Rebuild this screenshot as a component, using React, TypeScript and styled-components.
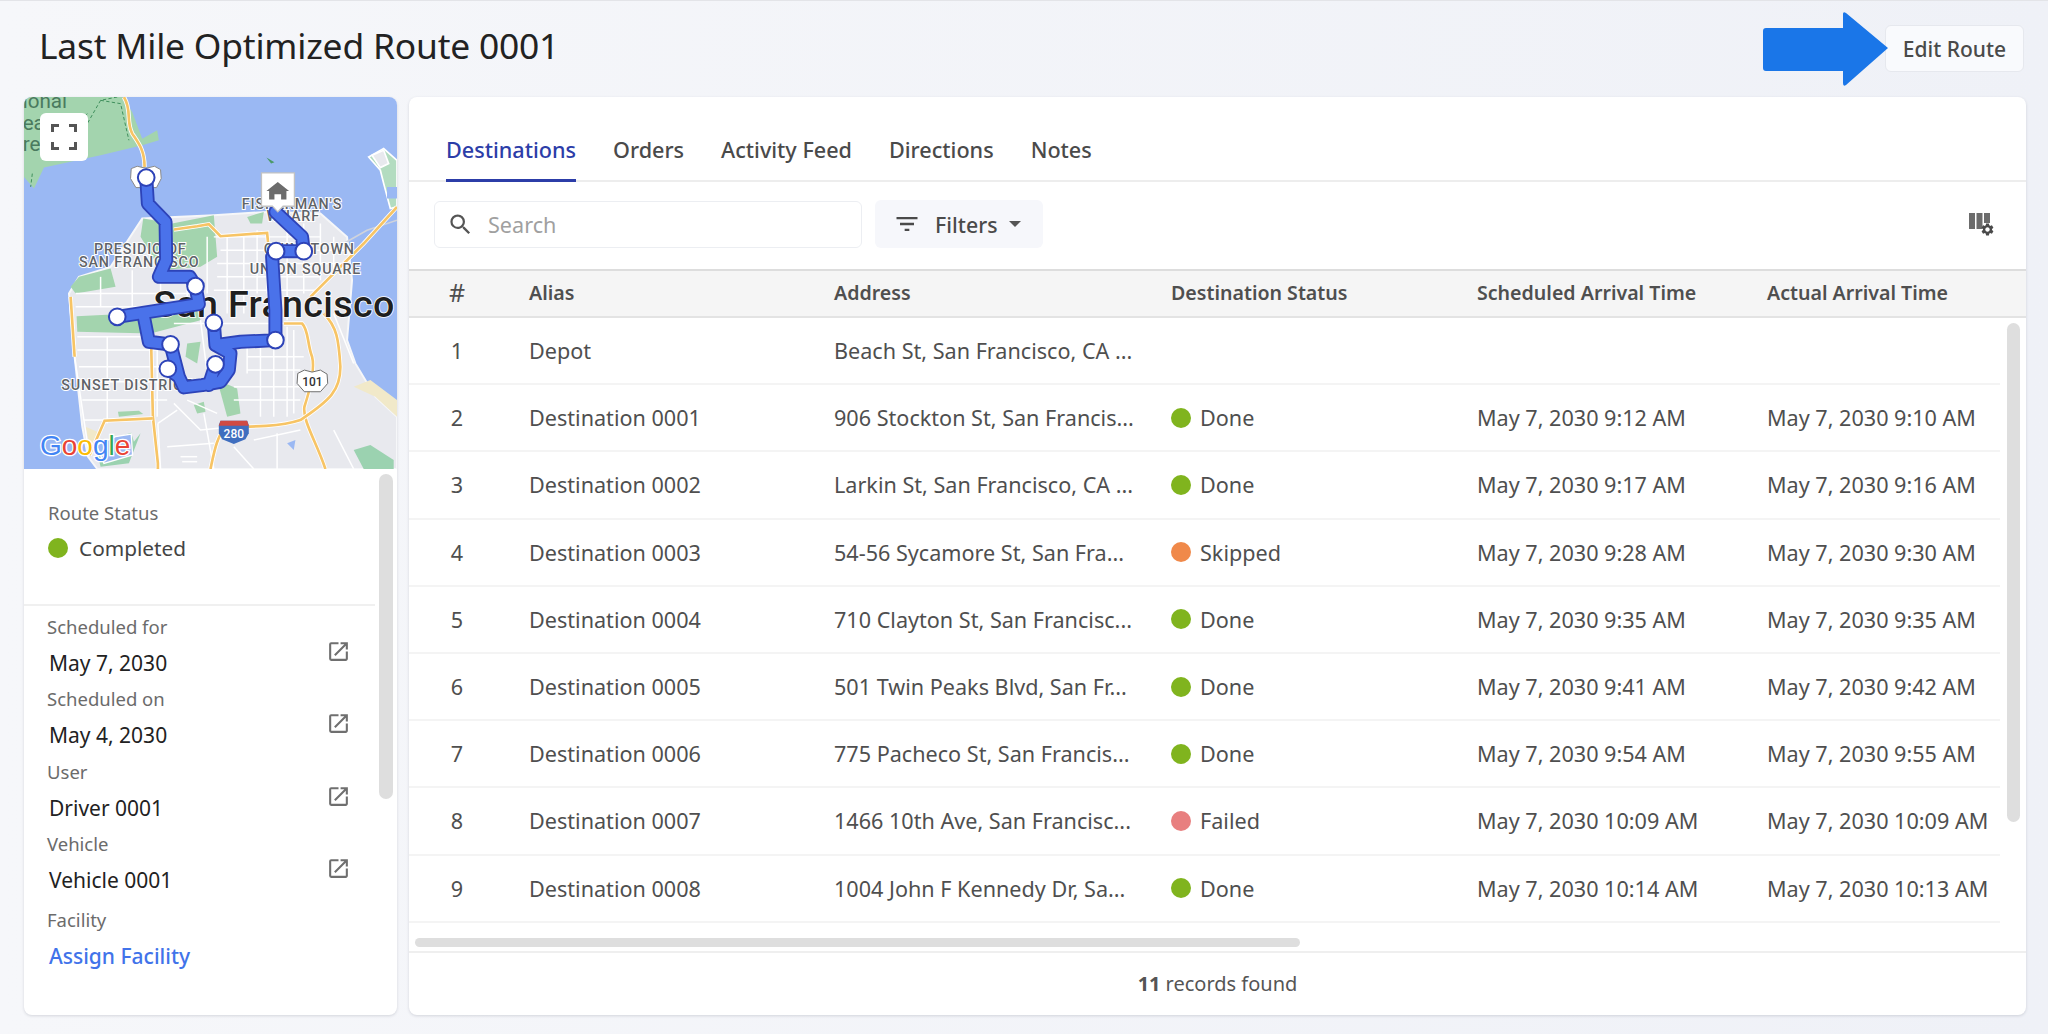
import React from 'react';
import styled, { createGlobalStyle } from 'styled-components';
import { MdFilterList, MdOpenInNew, MdSearch, MdSettings } from 'react-icons/md';

const GlobalStyle = createGlobalStyle`
  html, body {
    margin: 0;
    padding: 0;
    height: 100%;
    overflow: hidden;
  }
  body {
    font-family: "Noto Sans", "Open Sans", sans-serif;
    color: #4a4a4a;
  }
`;

const Page = styled.div`
  position: relative;
  width: 2048px;
  height: 1034px;
  box-sizing: border-box;
  padding: 0 22px 0 24px;
  border-top: 1px solid #e3e4e8;
  background: linear-gradient(to right, #f6f7fa, #eff1f7);
  overflow: hidden;
`;

const Header = styled.header`
  display: flex;
  justify-content: space-between;
  align-items: center;
  height: 96px;
`;

const Title = styled.h1`
  margin: 0 0 0 15px;
  padding-bottom: 9px;
  font-size: 35.4px;
  font-weight: 400;
  color: #222;
  letter-spacing: -0.2px;
`;

const EditButton = styled.button`
  width: 139px;
  height: 47px;
  margin: 0 2px 2px 0;
  padding: 2px 0 0;
  border: 1px solid #e6e8ee;
  border-radius: 6px;
  background: #f9fafd;
  color: #4a4a4a;
  font: 500 21px "Noto Sans", sans-serif;
`;

const ArrowMark = styled.svg`
  position: absolute;
  left: 1763px;
  top: 10px;
  width: 126px;
  height: 76px;
`;

const Main = styled.main`
  display: flex;
  gap: 12px;
  height: 918px;
`;

const Card = styled.section`
  position: relative;
  background: #fff;
  border-radius: 8px;
  box-shadow: 0 1px 3px rgba(40, 45, 70, 0.16);
  overflow: hidden;
`;

const SideCard = styled(Card)`
  width: 373px;
  flex: none;
`;

const ContentCard = styled(Card)`
  flex: 1;
  display: flex;
  flex-direction: column;
`;

const MapFrame = styled.div`
  position: relative;
  height: 372px;
`;

const MapImage = styled.svg`
  display: block;
  width: 373px;
  height: 372px;
`;

const ExpandButton = styled.button`
  position: absolute;
  left: 16px;
  top: 16px;
  display: flex;
  align-items: center;
  justify-content: center;
  width: 48px;
  height: 48px;
  padding: 0;
  border: 0;
  border-radius: 6px;
  background: #fff;
`;

const Thumb = styled.div<{ $left: number; $top: number; $width: number; $height: number }>`
  position: absolute;
  left: ${p => p.$left}px;
  top: ${p => p.$top}px;
  width: ${p => p.$width}px;
  height: ${p => p.$height}px;
  border-radius: 7px;
  background: #dedede;
`;

const StatusBlock = styled.div`
  box-sizing: border-box;
  width: 351px;
  height: 137px;
  padding: 26px 0 0 24px;
  border-bottom: 2px solid #f0f0f0;
`;

const FieldLabel = styled.div`
  font-size: 18.5px;
  line-height: 36px;
  color: #6b6b6b;
`;

const StatusLine = styled.div`
  display: flex;
  align-items: center;
  gap: 11px;
  font-size: 20.8px;
  line-height: 34px;
  color: #444;
`;

const Dot = styled.span<{ $color: string }>`
  flex: none;
  width: 20px;
  height: 20px;
  border-radius: 50%;
  background: ${p => p.$color};
`;

const Details = styled.div`
  padding: 3px 46px 0 23px;
`;

const DetailRow = styled.div`
  display: flex;
  justify-content: space-between;
  height: 72.4px;
  color: #6b6b6b;
`;

const LastField = styled.div`
  padding-top: 3px;
`;

const FieldValue = styled.div`
  padding-left: 2px;
  font-size: 21px;
  line-height: 36px;
  color: #222;
`;

const LinkValue = styled(FieldValue)`
  color: #4173ea;
  font-weight: 500;
`;

const OpenIcon = styled(MdOpenInNew)`
  margin-top: 30px;
  font-size: 25px;
  color: #6f6f6f;
`;

const Tabs = styled.nav`
  display: flex;
  gap: 37px;
  box-sizing: border-box;
  height: 85px;
  padding: 0 0 0 37px;
  border-bottom: 2px solid #ededed;
`;

const Tab = styled.a<{ $active?: boolean }>`
  display: flex;
  align-items: center;
  box-sizing: border-box;
  height: 85px;
  padding-top: 22px;
  border-bottom: 3px solid ${p => (p.$active ? '#2c3da8' : 'transparent')};
  font-size: 21.6px;
  font-weight: 500;
  color: ${p => (p.$active ? '#2c3da8' : '#4a4a4a')};
`;

const Toolbar = styled.div`
  display: flex;
  align-items: center;
  gap: 13px;
  box-sizing: border-box;
  height: 87px;
  padding: 0 31px 3px 25px;
`;

const SearchBox = styled.div`
  display: flex;
  align-items: center;
  gap: 14px;
  box-sizing: border-box;
  width: 428px;
  height: 47px;
  padding-left: 12px;
  border: 1px solid #eceef2;
  border-radius: 6px;
  color: #555;
  font-size: 27px;
`;

const Placeholder = styled.span`
  font-size: 21.6px;
  color: #a0a0a0;
`;

const FilterButton = styled.button`
  display: flex;
  align-items: center;
  box-sizing: border-box;
  width: 168px;
  height: 48px;
  padding: 0 0 0 20px;
  border: 0;
  border-radius: 6px;
  background: #f6f7fb;
  color: #4a4a4a;
  font: 500 21.3px "Noto Sans", sans-serif;
  gap: 14px;
`;

const FilterIcon = styled(MdFilterList)`
  font-size: 28px;
  margin-left: -2px;
`;

const Caret = styled.span`
  width: 0;
  height: 0;
  margin-left: -3px;
  border-left: 6px solid transparent;
  border-right: 6px solid transparent;
  border-top: 6px solid #555;
`;

const ColumnsIcon = styled.svg`
  width: 26px;
  height: 25px;
  margin-left: auto;
`;

const TableArea = styled.div`
  position: relative;
  height: 684px;
  border-top: 2px solid #ddd;
  border-bottom: 2px solid #efefef;
  box-sizing: border-box;
  overflow: hidden;
`;

const cols = '120px 305px 337px 306px 290px 1fr';

const HeadRow = styled.div`
  display: grid;
  grid-template-columns: ${cols};
  align-items: center;
  box-sizing: border-box;
  height: 47px;
  padding-bottom: 3px;
  background: #f5f5f5;
  border-bottom: 2px solid #e3e3e3;
  font-size: 19.6px;
  font-weight: 600;
  color: #4f4f4f;
`;

const Row = styled.div`
  display: grid;
  grid-template-columns: ${cols};
  align-items: center;
  box-sizing: border-box;
  width: 1591px;
  height: 67.2px;
  border-bottom: 2px solid #f4f4f4;
  font-size: 21.6px;
  color: #4f4f4f;
`;

const IndexCell = styled.div<{ $big?: boolean }>`
  width: 96px;
  text-align: center;
  font-size: ${p => (p.$big ? 25 : 21.6)}px;
  font-weight: ${p => (p.$big ? 400 : 'inherit')};
`;

const StatusCell = styled.div`
  display: flex;
  align-items: center;
  gap: 9px;
`;

const NoWrap = styled.div`
  white-space: nowrap;
`;

const Footer = styled.footer`
  display: flex;
  align-items: center;
  justify-content: center;
  flex: 1;
  padding-bottom: 2px;
  font-size: 20px;
  color: #555;
`;

const Strong = styled.strong`
  margin-right: 5px;
  font-weight: 700;
`;

const DONE = '#80b41e';
const SKIPPED = '#f0894a';
const FAILED = '#e87f7f';

const rows = [
  { alias: 'Depot', address: 'Beach St, San Francisco, CA ...' },
  { alias: 'Destination 0001', address: '906 Stockton St, San Francis...', status: 'Done', color: DONE, planned: 'May 7, 2030 9:12 AM', actual: 'May 7, 2030 9:10 AM' },
  { alias: 'Destination 0002', address: 'Larkin St, San Francisco, CA ...', status: 'Done', color: DONE, planned: 'May 7, 2030 9:17 AM', actual: 'May 7, 2030 9:16 AM' },
  { alias: 'Destination 0003', address: '54-56 Sycamore St, San Fra...', status: 'Skipped', color: SKIPPED, planned: 'May 7, 2030 9:28 AM', actual: 'May 7, 2030 9:30 AM' },
  { alias: 'Destination 0004', address: '710 Clayton St, San Francisc...', status: 'Done', color: DONE, planned: 'May 7, 2030 9:35 AM', actual: 'May 7, 2030 9:35 AM' },
  { alias: 'Destination 0005', address: '501 Twin Peaks Blvd, San Fr...', status: 'Done', color: DONE, planned: 'May 7, 2030 9:41 AM', actual: 'May 7, 2030 9:42 AM' },
  { alias: 'Destination 0006', address: '775 Pacheco St, San Francis...', status: 'Done', color: DONE, planned: 'May 7, 2030 9:54 AM', actual: 'May 7, 2030 9:55 AM' },
  { alias: 'Destination 0007', address: '1466 10th Ave, San Francisc...', status: 'Failed', color: FAILED, planned: 'May 7, 2030 10:09 AM', actual: 'May 7, 2030 10:09 AM' },
  { alias: 'Destination 0008', address: '1004 John F Kennedy Dr, Sa...', status: 'Done', color: DONE, planned: 'May 7, 2030 10:14 AM', actual: 'May 7, 2030 10:13 AM' },
];

const details = [
  { label: 'Scheduled for', value: 'May 7, 2030' },
  { label: 'Scheduled on', value: 'May 4, 2030' },
  { label: 'User', value: 'Driver 0001' },
  { label: 'Vehicle', value: 'Vehicle 0001' },
];

// map drawing uses the pixel grid of the reference crop (3x)
const streets = [
  'M225 640H600', 'M225 680H460', 'M230 770H450', 'M230 810H470', 'M235 860H480', 'M240 905H500', 'M245 960H500',
  'M320 770V1030', 'M395 570V690', 'M470 810V1010', 'M520 970L600 1050L700 1040',
  'M640 470H960', 'M660 510H1040', 'M650 550H1040', 'M650 590H960', 'M640 630H950', 'M680 470V700', 'M730 470V700',
  'M770 450V640', 'M860 430V720', 'M910 430V640', 'M960 430V600', 'M1000 470V570', 'M740 800V880', 'M780 800V1010',
  'M820 800V1010', 'M860 740V1010', 'M880 750V1000', 'M740 830H910', 'M740 870H900', 'M700 920H900', 'M700 960H900',
  'M560 960L650 1000', 'M472 1030L530 990', 'M500 1100L640 1090', 'M760 1080L900 1050', 'M830 1060V1167', 'M1000 700L1060 850',
  'M600 720L620 880', 'M520 730H880', 'M540 1130H590', 'M545 1145H590',
  'M300 590V680', 'M480 600V660', 'M560 590V680', 'M620 470V640',
  'M800 470V640', 'M700 1100L760 1167', 'M1000 1050L1060 1167', 'M610 1000L640 1167',
  'M222 830L250 1020L262 1100', 'M250 1020H312', 'M472 1030L480 1167',
];

const highways = [
  'M370 50C395 90 375 120 395 160C415 190 432 210 432 260',
  'M520 448L590 438L625 432L660 468L800 458L805 510',
  'M1190 380L1090 490L930 650',
  'M850 730H905C925 750 920 790 935 830C945 870 925 940 912 980C905 1020 950 1090 975 1167',
  'M970 700C1010 740 1015 780 1020 860C1020 930 990 960 900 1020C840 1040 760 1040 680 1040C650 1060 640 1120 630 1167',
  'M452 800L457 1010L472 1150V1167',
  'M210 650L222 830',
  'M267 1125L312 1022L457 1015',
];

const parks = [
  'M70 50H365L395 95L425 175L470 150L475 180L425 195L300 225L130 262L100 325L70 290Z',
  'M428 415L515 430L640 405L650 530L600 560L480 570L420 470Z',
  'M210 620L235 590L330 565L345 620L225 640Z',
  'M228 708L590 690L600 720L450 760L230 755Z',
  'M560 790L600 785L590 850L555 830Z',
  'M650 900L710 925L720 1000L680 1010Z',
  'M740 410L790 395L785 430L750 430Z',
  'M580 975L610 965L615 995L590 1000Z',
  'M352 995L415 992L428 1002L355 1010Z',
];

const routePath =
  'M437 292L442 370L495 425L497 540L475 590H568L585 618L595 672L350 710M430 710L445 785L510 793L535 890L550 922L605 915L660 905L685 870L690 820L645 795L640 728M645 795L720 785L825 780L825 690L815 530L827 513H910L905 470L825 395M502 866L535 890M645 853L625 915';

const stops: [number, number][] = [
  [437, 292], [585, 618], [350, 710], [510, 793], [502, 866], [645, 853], [640, 728], [825, 780], [827, 513], [910, 513],
];

const labels: [string, number, number][] = [
  ['PRESIDIO OF', 280, 520],
  ['SAN FRANCISCO', 235, 560],
  ['FISHERMAN\'S', 724, 385],
  ['WHARF', 798, 422],
  ['CHINATOWN', 790, 522],
  ['UNION SQUARE', 748, 582],
  ['SUNSET DISTRICT', 182, 930],
];

const MapLabel = styled.text`
  font: 500 43px Roboto, sans-serif;
  letter-spacing: 2.5px;
  fill: #5f6368;
  stroke: #fff;
  stroke-width: 6px;
  paint-order: stroke;
`;

const CityLabel = styled.text`
  font: 500 113px Roboto, sans-serif;
  letter-spacing: 1px;
  fill: #1f1f1f;
  stroke: #fff;
  stroke-width: 5px;
  paint-order: stroke;
`;

const ParkLabel = styled.text`
  font: 400 62px Roboto, sans-serif;
  fill: #4a7a5e;
`;

const ShieldText = styled.text<{ $fill: string }>`
  font: 500 36px Roboto, sans-serif;
  text-anchor: middle;
  fill: ${p => p.$fill};
`;

const GoogleMark = styled.text`
  font: 400 84px "Liberation Sans", sans-serif;
  stroke: #fff;
  stroke-width: 8px;
  paint-order: stroke;
`;

const RouteMap = () => (
  <MapImage viewBox="70 50 1120 1117">
    <rect x="70" y="50" width="1120" height="1117" fill="#9ab8f3" />
    <path d="M205 640L235 590L330 560L425 415L640 405L800 395L960 400L1040 470L1055 600L1040 780L1065 850L1125 950L1190 1010V1167H290L262 1130L245 1040L222 830Z" fill="#e8e9ee" stroke="#f6f7f9" strokeWidth="6" />
    <path d="M1105 230L1150 205L1190 240V380L1170 385L1150 310L1140 270Z" fill="#b3dcc0" stroke="#fff" strokeWidth="5" />
    <path d="M1115 225L1150 210L1165 250L1140 262Z" fill="#e8e9ee" stroke="#fff" strokeWidth="5" />
    <path d="M1160 320H1190V355H1160Z" fill="#9ab8f3" />
    <path d="M1060 920L1110 900L1190 960V1010L1125 950Z" fill="#f1e9c9" />
    <path d="M1060 1110L1110 1095L1180 1140V1167H1090Z" fill="#9bd2b0" />
    <path d="M255 1040L300 1060L270 1110Z" fill="#f1e9c9" />
    <path d="M340 1075L392 1058L400 1085L420 1060L385 1150L300 1160L285 1100Z" fill="#9bd2b0" />
    <path d="M287 1095L345 1070L392 1062L396 1125L310 1150Z" fill="#9ab8f3" stroke="#fff" strokeWidth="4" />
    {parks.map(d => <path key={d} d={d} fill="#a3d4ae" />)}
    <path d="M300 60L360 70L385 180M350 50L300 60L260 130M230 130L260 100M95 280L90 320" fill="none" stroke="#3f8f5c" strokeWidth="3" strokeDasharray="10 7" />
    <path d="M798 232L822 246L812 250Z" fill="#4b9a68" />
    <path d="M860 1090L885 1080L880 1110Z" fill="#9ab8f3" />
    <path d="M1030 490L1100 450L1190 420" fill="none" stroke="#cfd3dc" strokeWidth="5" />
    {streets.map(d => <path key={d} d={d} fill="none" stroke="#fff" strokeWidth="4.5" />)}
    {highways.map(d => (
      <g key={d} fill="none">
        <path d={d} stroke="#fff" strokeWidth="13" />
        <path d={d} stroke="#f7c465" strokeWidth="8" />
      </g>
    ))}
    <ParkLabel x="66" y="84">ional</ParkLabel>
    <ParkLabel x="66" y="148">ea</ParkLabel>
    <ParkLabel x="66" y="212">re</ParkLabel>
    {labels.map(([t, x, y]) => <MapLabel key={t} x={x} y={y}>{t}</MapLabel>)}
    <CityLabel x="458" y="710">San Francisco</CityLabel>
    <path d="M392 265L410 258L436 264L462 258L480 268L482 295L468 322H406L390 295Z" fill="#fff" stroke="#8a8a8a" strokeWidth="3" />
    <path d="M892 880L912 870L935 876L960 870L980 882L982 910L960 935H912L890 910Z" fill="#fff" stroke="#6f6f6f" strokeWidth="3" />
    <ShieldText x="936" y="918" $fill="#333">101</ShieldText>
    <path d="M655 1035L660 1022H740L745 1035V1060L735 1078L700 1092L665 1078L655 1060Z" fill="#3f6ebf" />
    <path d="M655 1037L660 1022H740L745 1037Z" fill="#cf4a44" />
    <ShieldText x="700" y="1075" $fill="#fff">280</ShieldText>
    <path d={routePath} fill="none" stroke="#2d43b8" strokeWidth="42" strokeLinejoin="round" strokeLinecap="round" />
    <path d={routePath} fill="none" stroke="#4a72ea" strokeWidth="31" strokeLinejoin="round" strokeLinecap="round" />
    {stops.map(([x, y]) => <circle key={`${x}-${y}`} cx={x} cy={y} r="25" fill="#fff" stroke="#2d43b8" strokeWidth="6" />)}
    <path d="M783 278H882V378H848L832 395L816 378H783Z" fill="#fff" stroke="#c2c2c2" strokeWidth="4" />
    <path d="M832 305L866 332H858V358H842V342H822V358H806V332H798Z" fill="#6c6c6c" />
    <GoogleMark x="118" y="1126">
      <tspan fill="#4285f4">G</tspan>
      <tspan fill="#ea4335">o</tspan>
      <tspan fill="#fbbc05">o</tspan>
      <tspan fill="#4285f4">g</tspan>
      <tspan fill="#34a853">l</tspan>
      <tspan fill="#ea4335">e</tspan>
    </GoogleMark>
  </MapImage>
);

const App = () => (
  <Page>
    <GlobalStyle />
    <Header>
      <Title>Last Mile Optimized Route 0001</Title>
      <EditButton>Edit Route</EditButton>
    </Header>
    <ArrowMark viewBox="0 0 126 76">
      <path d="M3 17H80V3Q80 0 83 2L125 37L83 74Q80 76 80 72V60H3Q0 60 0 57V20Q0 17 3 17Z" fill="#1a76e8" />
    </ArrowMark>
    <Main>
      <SideCard>
        <MapFrame>
          <RouteMap />
          <ExpandButton aria-label="Expand map">
            <svg width="26" height="26" viewBox="0 0 26 26" fill="none" stroke="#555" strokeWidth="3">
              <path d="M1.5 8V1.5H8M18 1.5H24.5V8M24.5 18V24.5H18M8 24.5H1.5V18" />
            </svg>
          </ExpandButton>
        </MapFrame>
        <StatusBlock>
          <FieldLabel>Route Status</FieldLabel>
          <StatusLine>
            <Dot $color={DONE} />
            Completed
          </StatusLine>
        </StatusBlock>
        <Details>
          {details.map(d => (
            <DetailRow key={d.label}>
              <div>
                <FieldLabel>{d.label}</FieldLabel>
                <FieldValue>{d.value}</FieldValue>
              </div>
              <OpenIcon />
            </DetailRow>
          ))}
          <LastField>
            <FieldLabel>Facility</FieldLabel>
            <LinkValue>Assign Facility</LinkValue>
          </LastField>
        </Details>
        <Thumb $left={355} $top={377} $width={14} $height={325} />
      </SideCard>
      <ContentCard>
        <Tabs>
          <Tab $active>Destinations</Tab>
          <Tab>Orders</Tab>
          <Tab>Activity Feed</Tab>
          <Tab>Directions</Tab>
          <Tab>Notes</Tab>
        </Tabs>
        <Toolbar>
          <SearchBox>
            <MdSearch />
            <Placeholder>Search</Placeholder>
          </SearchBox>
          <FilterButton>
            <FilterIcon />
            Filters
            <Caret />
          </FilterButton>
          <ColumnsIcon viewBox="0 0 26 25" fill="#6c6c6c">
            <path d="M0 1H6V17H0ZM7.5 1H13.5V17H7.5ZM15 1H21V11H15Z" />
            <svg x="11" y="10" width="15" height="15" viewBox="0 0 24 24">
              <MdSettings size={24} />
            </svg>
          </ColumnsIcon>
        </Toolbar>
        <TableArea>
          <HeadRow>
            <IndexCell $big>#</IndexCell>
            <div>Alias</div>
            <div>Address</div>
            <div>Destination Status</div>
            <div>Scheduled Arrival Time</div>
            <div>Actual Arrival Time</div>
          </HeadRow>
          {rows.map((r, i) => (
            <Row key={r.alias}>
              <IndexCell>{i + 1}</IndexCell>
              <NoWrap>{r.alias}</NoWrap>
              <NoWrap>{r.address}</NoWrap>
              <StatusCell>
                {r.status && <Dot $color={r.color as string} />}
                {r.status}
              </StatusCell>
              <NoWrap>{r.planned}</NoWrap>
              <NoWrap>{r.actual}</NoWrap>
            </Row>
          ))}
          <Thumb $left={1598} $top={52} $width={13} $height={499} />
          <Thumb $left={6} $top={667} $width={885} $height={9} />
        </TableArea>
        <Footer>
          <Strong>11</Strong> records found
        </Footer>
      </ContentCard>
    </Main>
  </Page>
);

export default App;
